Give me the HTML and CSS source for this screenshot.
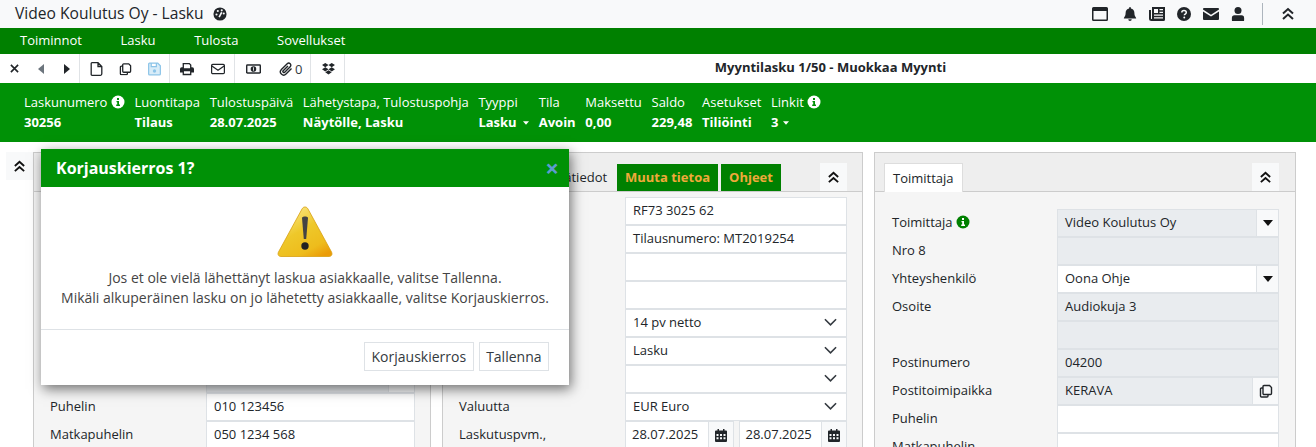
FILE: index.html
```html
<!DOCTYPE html>
<html lang="fi">
<head>
<meta charset="utf-8">
<title>Video Koulutus Oy - Lasku</title>
<link rel="stylesheet" href="styles.css">
</head>
<body>
<svg class="defs" width="0" height="0" aria-hidden="true">
  <symbol id="chev" viewBox="0 0 14 14"><path d="M2 6.5 7 2l5 4.5M2 12 7 7.5l5 4.5" fill="none" stroke="currentColor" stroke-width="2"/></symbol>
  <symbol id="info" viewBox="0 0 14 14"><circle cx="7" cy="7" r="6.5" fill="currentColor"/><path class="info-i" d="M6 3h2v2H6zM5.500 6H8v3.600h1V11H5.200V9.600h1V7.300h-.7z"/></symbol>
  <symbol id="copy" viewBox="0 0 14 14"><path d="M5 1.500h5.500L12.500 3.500V9.500a1 1 0 0 1-1 1H5a1 1 0 0 1-1-1v-7a1 1 0 0 1 1-1zM4 4H2.500a1 1 0 0 0-1 1v7a1 1 0 0 0 1 1H8a1 1 0 0 0 1-1v-1.500" fill="none" stroke="currentColor" stroke-width="1.400"/></symbol>
  <symbol id="cal" viewBox="0 0 12 13"><path d="M2.500 0h1.500v1.500h4V0h1.500v1.500H11a1 1 0 0 1 1 1V12a1 1 0 0 1-1 1H1a1 1 0 0 1-1-1V2.500a1 1 0 0 1 1-1h1.500z" fill="currentColor"/><path d="M1.500 5h2v2h-2zM5 5h2v2H5zM8.500 5h2v2h-2zM1.500 8.200h2v2h-2zM5 8.200h2v2H5zM8.500 8.200h2v2h-2z" fill="#f8f9fa"/></symbol>
  <symbol id="down" viewBox="0 0 14 8"><path d="M1 1l6 6 6-6" fill="none" stroke="#343a40" stroke-width="1.700"/></symbol>
  <symbol id="caret" viewBox="0 0 10 6"><path d="M0 0h10L5 6z" fill="currentColor"/></symbol>
</svg>

<header class="topbar">
  <h1 class="app-title">Video Koulutus Oy - Lasku</h1>
  <svg class="dash" viewBox="0 0 16 16"><circle cx="8" cy="8" r="7.500" fill="#212529"/><circle cx="4" cy="8.500" r="1.200" fill="#f8f9fa"/><circle cx="5.500" cy="4.500" r="1.200" fill="#f8f9fa"/><circle cx="10" cy="3.800" r="1.200" fill="#f8f9fa"/><circle cx="12.300" cy="7.500" r="1.200" fill="#f8f9fa"/><path d="M7 11.500 10 6" stroke="#f8f9fa" stroke-width="1.800"/></svg>
  <div class="top-icons">
    <svg class="ti ti-first" viewBox="0 0 16 14"><path d="M1.500 0h13A1.500 1.500 0 0 1 16 1.500v11a1.500 1.500 0 0 1-1.500 1.500h-13A1.500 1.500 0 0 1 0 12.500v-11A1.500 1.500 0 0 1 1.500 0zM1.500 4v8.500h13V4z" fill="#212529" fill-rule="evenodd"/></svg>
    <svg class="ti" viewBox="0 0 14 16"><path d="M7 0a1 1 0 0 1 1 1v.7c2.500.5 4 2.500 4 5 0 3 .8 4.300 2 5.800v.5H0v-.5c1.200-1.500 2-2.800 2-5.800 0-2.500 1.500-4.500 4-5V1a1 1 0 0 1 1-1zM5 14h4a2 2 0 0 1-4 0z" fill="#212529"/></svg>
    <svg class="ti" viewBox="0 0 16 14"><path d="M3 0h13v12.500a1.500 1.500 0 0 1-1.500 1.500h-12A2.500 2.500 0 0 1 0 11.500V3h2v8.500a.5.500 0 0 0 1 0zM5 2v4h4V2zM10.500 2v1.300H14V2zM10.500 4.700V6H14V4.700zM5 7.500v1.300h9V7.500zM5 10.200v1.300h9v-1.300z" fill="#212529" fill-rule="evenodd"/></svg>
    <svg class="ti" viewBox="0 0 16 16"><circle cx="8" cy="8" r="8" fill="#212529"/><path d="M5.500 6.200C5.500 4.800 6.600 4 8 4s2.600.9 2.600 2.200c0 2-2.200 1.800-2.200 3.300" fill="none" stroke="#f8f9fa" stroke-width="1.700"/><circle cx="8.300" cy="12" r="1.100" fill="#f8f9fa"/></svg>
    <svg class="ti" viewBox="0 0 16 12"><path d="M1 0h14a1 1 0 0 1 1 1v.6L8 6.800 0 1.600V1a1 1 0 0 1 1-1zM0 3.400l8 5.200 8-5.200V11a1 1 0 0 1-1 1H1a1 1 0 0 1-1-1z" fill="#212529"/></svg>
    <svg class="ti" viewBox="0 0 14 16"><circle cx="7" cy="4" r="4" fill="#212529"/><path d="M3 9.500h8a3 3 0 0 1 3 3V15a1 1 0 0 1-1 1H1a1 1 0 0 1-1-1v-2.500a3 3 0 0 1 3-3z" fill="#212529"/></svg>
    <span class="top-sep"></span>
    <svg class="ti-chev"><use href="#chev"/></svg>
  </div>
</header>

<nav class="menubar">
  <span class="menu-item">Toiminnot</span>
  <span class="menu-item">Lasku</span>
  <span class="menu-item">Tulosta</span>
  <span class="menu-item">Sovellukset</span>
</nav>

<div class="toolbar">
  <div class="tool-group g1">
    <svg class="tb x" viewBox="0 0 10 10"><path d="M1 1l8 8M9 1l-8 8" stroke="#212529" stroke-width="1.800"/></svg>
    <svg class="tb tri tri-a" viewBox="0 0 6 10"><path d="M6 0v10L0 5z" fill="#6c757d"/></svg>
    <svg class="tb tri tri-b" viewBox="0 0 6 10"><path d="M0 0v10l6-5z" fill="#212529"/></svg>
  </div>
  <div class="tool-group g2">
    <svg class="tb ico" viewBox="0 0 12 14"><path d="M1.500.7h6l3.800 3.800v7.300a1.500 1.500 0 0 1-1.500 1.500H1.500A.800.800 0 0 1 .7 12.500V1.500a.800.800 0 0 1 .8-.8zM7.500.7v3.800h3.800" fill="none" stroke="#212529" stroke-width="1.300"/></svg>
    <svg class="tb ico" viewBox="0 0 14 14"><use href="#copy" color="#212529"/></svg>
    <svg class="tb ico" viewBox="0 0 14 14"><path d="M1.500.700h9L13.300 3.500v8.800a1 1 0 0 1-1 1H1.700a1 1 0 0 1-1-1V1.500a.800.800 0 0 1 .8-.8zM3.500 1v3.500h5.500V1" fill="#d8ecf8" stroke="#8cc4e8" stroke-width="1.300"/><circle cx="7" cy="9.200" r="1.800" fill="#8cc4e8"/></svg>
  </div>
  <div class="tool-group g3">
    <svg class="tb wide" viewBox="0 0 16 14"><path d="M3 0h8l2 2v3h1a2 2 0 0 1 2 2v4h-3v3H3v-3H0V7a2 2 0 0 1 2-2h1zM4.500 1.500V6h7V2.600L10.400 1.500zM4.500 9.500V12.500h7V9.500z" fill="#212529" fill-rule="evenodd"/></svg>
    <svg class="tb wide" viewBox="0 0 16 12"><rect x=".7" y=".7" width="14.600" height="10.600" rx="1.300" fill="none" stroke="#212529" stroke-width="1.400"/><path d="M1 2.500l7 5 7-5" fill="none" stroke="#212529" stroke-width="1.400"/></svg>
  </div>
  <div class="tool-group g4">
    <svg class="tb money" viewBox="0 0 16 10"><rect width="16" height="10" rx="1.500" fill="#212529"/><rect x="1.500" y="1.500" width="13" height="7" fill="#f8f9fa"/><circle cx="8" cy="5" r="3" fill="#212529"/><rect x="7.600" y="3.200" width=".9" height="3.600" fill="#f8f9fa"/></svg>
    <span class="attach"><svg class="tb clip" viewBox="0 0 14 14"><path d="M12.500 6.500 7 12a3.200 3.200 0 0 1-4.600-4.600L8.200 1.700a2.100 2.100 0 0 1 3 3L5.700 10.200a1 1 0 0 1-1.500-1.500L9 4" fill="none" stroke="#212529" stroke-width="1.400"/></svg>0</span>
  </div>
  <div class="tool-group g5">
    <svg class="tb drop" viewBox="0 0 14 13"><path d="M3.500 0 7 2.300 3.500 4.600 0 2.300zM10.500 0 14 2.300 10.500 4.600 7 2.300zM3.500 4.600 7 6.900 3.500 9.200 0 6.900zM10.500 4.600 14 6.900l-3.500 2.300L7 6.900zM3.500 10 7 7.800l3.500 2.200L7 12.500z" fill="#212529"/></svg>
  </div>
  <div class="form-title">Myyntilasku 1/50 - Muokkaa Myynti</div>
</div>

<section class="infobar">
  <div class="col"><span class="lbl">Laskunumero <svg class="i-w"><use href="#info"/></svg></span><b>30256</b></div>
  <div class="col"><span class="lbl">Luontitapa</span><b>Tilaus</b></div>
  <div class="col"><span class="lbl">Tulostuspäivä</span><b>28.07.2025</b></div>
  <div class="col"><span class="lbl">Lähetystapa, Tulostuspohja</span><b>Näytölle, Lasku</b></div>
  <div class="col"><span class="lbl">Tyyppi</span><b>Lasku <svg class="cr cr-g"><use href="#caret"/></svg></b></div>
  <div class="col"><span class="lbl">Tila</span><b>Avoin</b></div>
  <div class="col"><span class="lbl">Maksettu</span><b>0,00</b></div>
  <div class="col"><span class="lbl">Saldo</span><b>229,48</b></div>
  <div class="col"><span class="lbl">Asetukset</span><b>Tiliöinti</b></div>
  <div class="col"><span class="lbl">Linkit <svg class="i-w"><use href="#info"/></svg></span><b>3 <svg class="cr"><use href="#caret"/></svg></b></div>
</section>

<main class="content">
  <button class="collapse side"><svg class="chev"><use href="#chev"/></svg></button>

  <section class="panel panel-a">
    <div class="panel-head"></div>
    <div class="panel-body">
      <div class="row"><span></span><span class="field"></span></div>
      <div class="row"><span></span><span class="field"></span></div>
      <div class="row"><span></span><span class="field"></span></div>
      <div class="row"><span></span><span class="field"></span></div>
      <div class="row"><span></span><span class="field"></span></div>
      <div class="row"><span></span><span class="field"></span></div>
      <div class="row"><span></span><span class="field ro has-btn"><span class="txt"></span><span class="addon"></span></span></div>
      <div class="row"><span>Puhelin</span><span class="field">010 123456</span></div>
      <div class="row"><span>Matkapuhelin</span><span class="field">050 1234 568</span></div>
    </div>
  </section>

  <section class="panel panel-b">
    <div class="panel-head">
      <span class="tab plain">Lisätiedot</span>
      <span class="tab green">Muuta tietoa</span>
      <span class="tab green">Ohjeet</span>
      <button class="collapse"><svg class="chev"><use href="#chev"/></svg></button>
    </div>
    <div class="panel-body">
      <div class="row"><span></span><span class="field">RF73 3025 62</span></div>
      <div class="row"><span></span><span class="field">Tilausnumero: MT2019254</span></div>
      <div class="row"><span></span><span class="field"></span></div>
      <div class="row"><span></span><span class="field"></span></div>
      <div class="row"><span></span><span class="field sel">14 pv netto<svg class="dn"><use href="#down"/></svg></span></div>
      <div class="row"><span></span><span class="field sel">Lasku<svg class="dn"><use href="#down"/></svg></span></div>
      <div class="row"><span></span><span class="field sel"><svg class="dn"><use href="#down"/></svg></span></div>
      <div class="row"><span>Valuutta</span><span class="field sel">EUR Euro<svg class="dn"><use href="#down"/></svg></span></div>
      <div class="row"><span>Laskutuspvm.,</span>
        <span class="dates">
          <span class="field has-btn"><span class="txt">28.07.2025</span><span class="addon"><svg class="calic"><use href="#cal"/></svg></span></span>
          <span class="field has-btn"><span class="txt">28.07.2025</span><span class="addon"><svg class="calic"><use href="#cal"/></svg></span></span>
        </span>
      </div>
    </div>
  </section>

  <section class="panel panel-c">
    <div class="panel-head">
      <span class="tab active">Toimittaja</span>
      <button class="collapse"><svg class="chev"><use href="#chev"/></svg></button>
    </div>
    <div class="panel-body">
      <div class="row"><span>Toimittaja <svg class="i-g"><use href="#info"/></svg></span><span class="field ro has-btn"><span class="txt">Video Koulutus Oy</span><span class="addon narrow"><svg class="cr-b"><use href="#caret"/></svg></span></span></div>
      <div class="row"><span>Nro 8</span><span class="field ro"></span></div>
      <div class="row"><span>Yhteyshenkilö</span><span class="field has-btn"><span class="txt">Oona Ohje</span><span class="addon narrow"><svg class="cr-b"><use href="#caret"/></svg></span></span></div>
      <div class="row"><span>Osoite</span><span class="field ro">Audiokuja 3</span></div>
      <div class="row"><span></span><span class="field ro"></span></div>
      <div class="row"><span>Postinumero</span><span class="field ro">04200</span></div>
      <div class="row"><span>Postitoimipaikka</span><span class="field ro has-btn"><span class="txt">KERAVA</span><span class="addon"><svg class="copyic"><use href="#copy"/></svg></span></span></div>
      <div class="row"><span>Puhelin</span><span class="field"></span></div>
      <div class="row"><span>Matkapuhelin</span><span class="field"></span></div>
    </div>
  </section>
</main>

<div class="modal" role="dialog">
  <div class="modal-head"><span class="modal-title">Korjauskierros 1?</span><span class="modal-x">×</span></div>
  <div class="modal-body">
    <svg class="warn" viewBox="0 0 56 52">
      <defs>
        <linearGradient id="wg" x1="0.200" y1="0" x2="0.800" y2="1"><stop offset="0" stop-color="#fbe88a"/><stop offset=".45" stop-color="#eec82a"/><stop offset=".8" stop-color="#eebc1c"/><stop offset="1" stop-color="#eb9c08"/></linearGradient>
      </defs>
      <path d="M28 1c1.500 0 2.300.8 3 2l23.500 43c1.200 2.300 0 4.500-2.500 4.500H4c-2.500 0-3.700-2.200-2.500-4.500L25 3c.7-1.200 1.500-2 3-2z" fill="url(#wg)" stroke="#d8a010" stroke-width=".8"/>
      <path d="M25 12c0-2 6-2 6 0l-1.800 21h-2.400z" fill="#444"/>
      <circle cx="28" cy="40" r="3.700" fill="#222"/>
    </svg>
    <p class="modal-text">Jos et ole vielä lähettänyt laskua asiakkaalle, valitse Tallenna.</p>
    <p class="modal-text">Mikäli alkuperäinen lasku on jo lähetetty asiakkaalle, valitse Korjauskierros.</p>
  </div>
  <div class="modal-foot">
    <button class="btn">Korjauskierros</button>
    <button class="btn">Tallenna</button>
  </div>
</div>
</body>
</html>
```
FILE: styles.css
```css
* { box-sizing: border-box; }
html, body { margin: 0; height: 447px; overflow: hidden; }
body { font-family: "Open Sans", sans-serif; font-size: 13px; color: #212529; background: #fff; position: relative; line-height: 20px; }
.defs { position: absolute; }
svg { display: inline-block; }

.topbar { height: 28px; background: #f8f9fa; display: flex; align-items: center; padding-left: 15px; }
.app-title { margin: 0 0 2px; font-size: 15.6px; font-weight: 400; line-height: 26px; color: #212529; }
.dash { width: 14px; height: 14px; margin-left: 9px; margin-bottom: 1px; }
.top-icons { margin-left: auto; display: flex; align-items: center; width: 224px; }
.ti { width: 16px; height: 14px; margin-right: 11px; flex: none; }
.ti-first { margin-right: 14px; }
.top-sep { width: 1px; height: 22px; background: #adb5bd; margin-left: 5px; margin-right: 18px; }
.ti-chev { width: 14px; height: 14px; color: #212529; }

.menubar { height: 26px; background: #008000; display: flex; padding: 0 0 2px 20px; gap: 38.6px; align-items: center; color: #fff; }
.menu-item { line-height: 24px; }

.toolbar { height: 29px; background: #fff; display: flex; align-items: stretch; }
.tool-group { display: flex; align-items: center; border-right: 1px solid #e0e3e6; flex: none; }
.g1 { width: 80px; padding-left: 10px; }
.g2 { width: 90px; padding-left: 10px; gap: 16px; }
.g3 { width: 65px; padding-left: 10px; gap: 17px; }
.g4 { width: 76px; padding-left: 11px; gap: 18px; }
.g5 { width: 34px; padding-left: 11px; }
.tb { height: 14px; flex: none; }
.x { width: 9px; height: 9px; }
.tri { width: 6px; height: 10px; }
.tri-a { margin-left: 19px; }
.tri-b { margin-left: 20px; }
.ico { width: 13px; height: 14px; }
.wide { width: 14px; }
.drop { width: 13px; height: 12px; }
.money { width: 15px; height: 10px; }
.attach { display: flex; align-items: center; gap: 2px; color: #343a40; }
.clip { width: 14px; height: 14px; }
.form-title { flex: 1; text-align: center; font-weight: 700; line-height: 26px; }

.infobar { height: 59px; background: #009106; display: flex; gap: 9.7px; padding: 9px 0 0 24px; color: #fff; }
.col { display: flex; flex-direction: column; }
.lbl { display: flex; align-items: center; gap: 0; white-space: pre; line-height: 20px; }
.col b { font-weight: 700; line-height: 20px; white-space: pre; }
.i-w { width: 14px; height: 14px; color: #fff; --i: #009106; }
.i-g { width: 14px; height: 14px; color: #008000; --i: #fff; vertical-align: -2px; }
.info-i { fill: var(--i); }
.cr { width: 6px; height: 4px; color: #fff; vertical-align: 2px; margin-left: 1px; }
.cr-g { margin-left: 3px; }

.content { display: flex; align-items: flex-start; padding: 10px 0 0 6px; height: 305px; overflow: hidden; }
.collapse { width: 27px; height: 28px; padding: 0; border: 0; background: #f8f9fa; display: flex; align-items: center; justify-content: center; flex: none; }
.chev { width: 13px; height: 13px; color: #111; }
.panel { background: #f5f5f5; border: 1px solid #ccc; flex: none; height: 320px; }
.panel-a { width: 398px; }
.panel-b { width: 421px; margin-left: 11px; }
.panel-c { width: 422px; margin-left: 11px; }
.panel-head { height: 39px; background: #eee; border-bottom: 1px solid #ccc; display: flex; align-items: flex-end; position: relative; }
.panel-head .collapse { margin-left: auto; margin-right: 15px; }
.panel-b .panel-head { padding-left: 105px; }
.panel-c .panel-head { padding-left: 9px; }
.panel-c .panel-head .collapse { margin-right: 16px; }
.tab { height: 27px; line-height: 26px; white-space: nowrap; }
.tab.plain { width: 69px; }
.tab.green { background: #008000; color: #f0a93a; font-weight: 700; padding: 0 8px; }
.tab.green + .tab.green { margin-left: 3px; }
.tab.active { height: 29px; line-height: 28px; background: #fff; border: 1px solid #ddd; border-bottom: 0; margin-bottom: -1px; padding: 0 8px; }

.panel-body { padding: 5px 15px 0 16px; }
.panel-c .panel-body { padding: 17px 16px 0 17px; }
.row { display: grid; grid-template-columns: 1fr 222px; align-items: center; height: 28px; }
.row > span:first-child { padding-bottom: 2px; }
.panel-a .row { grid-template-columns: 1fr 209px; }
.field { height: 28px; background: #fff; border: 1px solid #dee2e6; padding: 0 7px 2px; display: flex; align-items: center; line-height: 24px; }
.field.ro { background: #e9ecef; }
.field.sel { justify-content: space-between; }
.dn { width: 13px; height: 8px; margin-right: 2px; margin-left: auto; }
.field.has-btn { padding: 0 0 0 7px; }
.txt { flex: 1; padding-bottom: 2px; }
.addon { width: 26px; height: 26px; background: #f8f9fa; border-left: 1px solid #dee2e6; display: flex; align-items: center; justify-content: center; flex: none; }
.addon.narrow { width: 22px; }
.cr-b { width: 10px; height: 6px; color: #111; }
.copyic { width: 14px; height: 14px; color: #212529; }
.calic { width: 12px; height: 13px; color: #212529; }
.dates { display: flex; gap: 5px; }
.dates .field { width: 108.500px; padding-left: 6px; }
.dates .addon { width: 25px; }

.modal { position: absolute; left: 41px; top: 149px; width: 528px; height: 236px; background: #fff; box-shadow: 2px 4px 12px rgba(0, 0, 0, .55); }
.modal-head { height: 38px; background: #009106; display: flex; align-items: center; justify-content: space-between; padding: 0 10px 0 15px; color: #fff; }
.modal-title { font-size: 16px; font-weight: 700; }
.modal-x { font-size: 24px; font-weight: 700; color: #5d9ccf; line-height: 20px; }
.modal-body { height: 143px; border-bottom: 1px solid #dee2e6; padding-top: 19px; text-align: center; color: #444; font-size: 14px; }
.warn { width: 56px; height: 52px; display: block; margin: 0 auto 10px; }
.modal-text { margin: 0; line-height: 20px; }
.modal-foot { display: flex; justify-content: flex-end; gap: 5px; padding: 12px 20px 0 0; }
.btn { font: inherit; font-size: 14px; color: #343a40; background: #fff; border: 1px solid #dee2e6; height: 29px; padding: 0 6.5px; }
```
